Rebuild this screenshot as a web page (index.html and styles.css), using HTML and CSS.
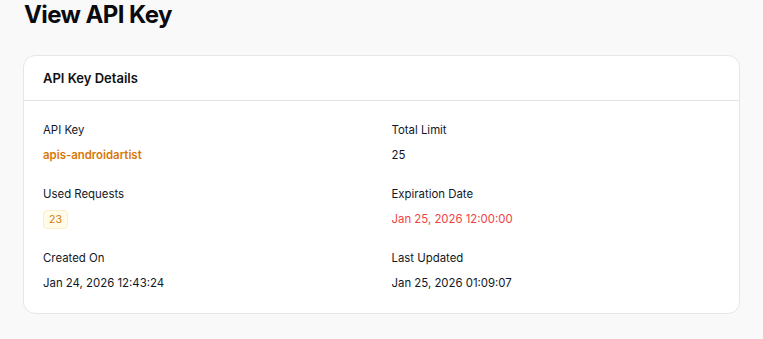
FILE: index.html
```html
<!DOCTYPE html>
<html lang="en">
<head>
<meta charset="utf-8">
<title>View API Key</title>
<link rel="stylesheet" href="styles.css">
</head>
<body>
<main class="page">
  <h1 class="page-title">View API Key</h1>
  <section class="card">
    <header class="card-header">
      <h2 class="card-title">API Key Details</h2>
    </header>
    <div class="card-body">
      <div class="field">
        <div class="label">API Key</div>
        <div class="value key">apis-androidartist</div>
      </div>
      <div class="field">
        <div class="label">Total Limit</div>
        <div class="value">25</div>
      </div>
      <div class="field">
        <div class="label">Used Requests</div>
        <div class="value"><span class="badge">23</span></div>
      </div>
      <div class="field">
        <div class="label">Expiration Date</div>
        <div class="value expired">Jan 25, 2026 12:00:00</div>
      </div>
      <div class="field">
        <div class="label">Created On</div>
        <div class="value">Jan 24, 2026 12:43:24</div>
      </div>
      <div class="field">
        <div class="label">Last Updated</div>
        <div class="value">Jan 25, 2026 01:09:07</div>
      </div>
    </div>
  </section>
</main>
</body>
</html>
```

FILE: styles.css
```css
* { box-sizing: border-box; }
html, body {
  margin: 0;
  padding: 0;
  background: #f9f9f9;
}
body {
  font-family: Inter, "Noto Sans", sans-serif;
  color: #111827;
}
.page {
  padding: 0 23px 26px 23px;
}
.page-title {
  margin: 0 0 26px 0;
  font-size: 24px;
  font-weight: 700;
  line-height: 29px;
  letter-spacing: -0.6px;
  color: #0b0b0f;
  padding-left: 1px;
}
.card {
  background: #fff;
  border: 1px solid #e6e6e6;
  border-radius: 12px;
}
.card-header {
  height: 45px;
  display: flex;
  align-items: center;
  padding: 0 19px;
  border-bottom: 1px solid #e3e3e3;
}
.card-title {
  margin: 0;
  font-size: 13px;
  font-weight: 600;
  color: #111;
}
.card-body {
  display: grid;
  grid-template-columns: 1fr 1fr;
  column-gap: 20px;
  row-gap: 19px;
  padding: 19px 19px 20px 19px;
}
.field {
  display: flex;
  flex-direction: column;
  gap: 5px;
}
.label {
  font-size: 11.4px;
  line-height: 20px;
  color: #111827;
}
.value {
  font-size: 11.4px;
  line-height: 20px;
  color: #111827;
}
.value.key {
  color: #d97706;
  font-weight: 600;
}
.value.expired {
  color: #ef4444;
}
.badge {
  display: inline-block;
  font-size: 10.5px;
  line-height: 17px;
  padding: 0 5px;
  color: #d97706;
  background: #fefbe8;
  border: 1px solid #fbefc9;
  border-radius: 4px;
}
```
